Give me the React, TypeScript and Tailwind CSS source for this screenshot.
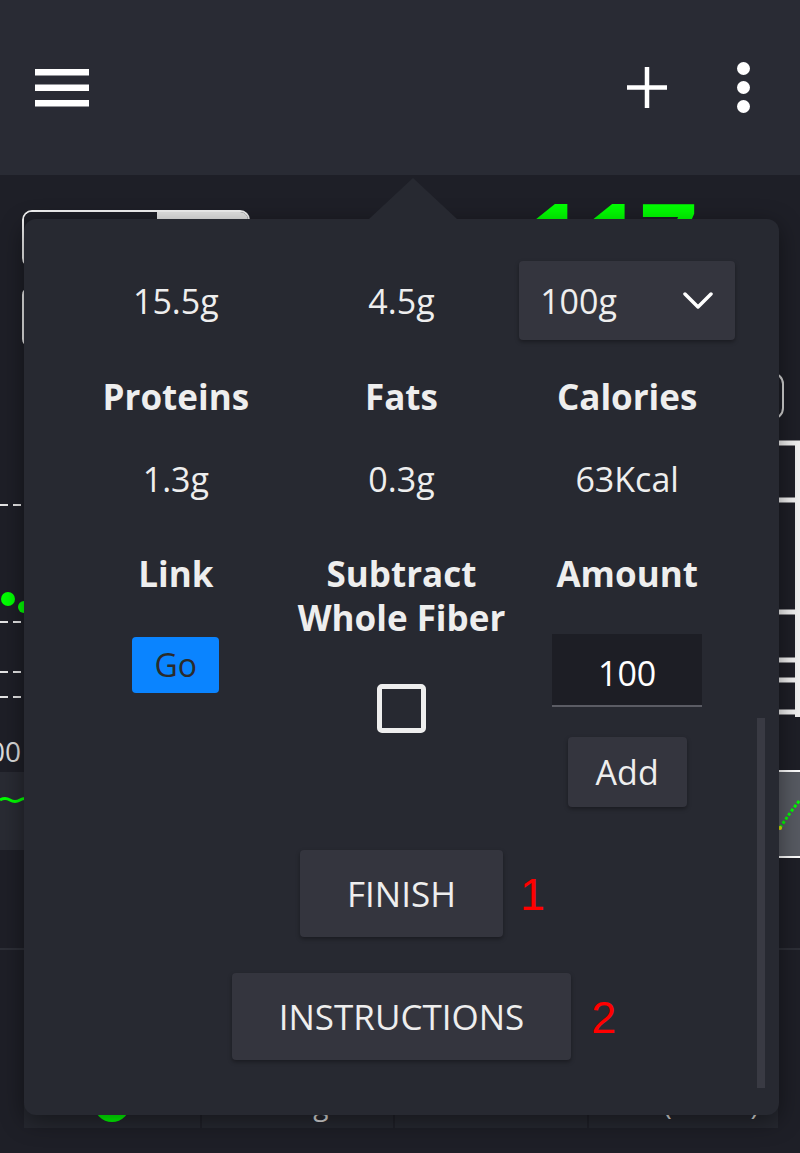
import React from 'react';

function Header() {
  return (
    <header className="flex h-[175px] items-center justify-between bg-[#292b34] pl-[35px] pr-[50px]">
      <svg width="54" height="38" viewBox="0 0 54 38" fill="#ffffff">
        <rect x="0" y="0" width="54" height="6.5" />
        <rect x="0" y="15.5" width="54" height="6.5" />
        <rect x="0" y="31" width="54" height="6.5" />
      </svg>
      <div className="flex items-center gap-[70px]">
        <svg width="40" height="41" viewBox="0 0 40 41" stroke="#ffffff" strokeWidth="4.5">
          <path d="M20 0 V41 M0 20.5 H40" />
        </svg>
        <svg width="13" height="51" viewBox="0 0 13 51" fill="#ffffff">
          <circle cx="6.5" cy="6.5" r="6.5" />
          <circle cx="6.5" cy="25.5" r="6.5" />
          <circle cx="6.5" cy="44.5" r="6.5" />
        </svg>
      </div>
    </header>
  );
}

// the screen behind the popover, mostly hidden
function Backdrop() {
  return (
    <main className="bg-[#1e1f27]">
      <section className="h-[265px] px-[22px]">
        <div className="flex h-[93px] items-start">
          <div className="mt-[35px] flex h-[58px] w-[228px] overflow-hidden rounded-[10px] border-2 border-[#f2f2f2]">
            <div className="w-[133px] bg-[#1e1f27]" />
            <div className="flex-1 bg-[#e4e4e4]" />
          </div>
          <span className="ml-[276px] mt-[32px] text-[100px] font-bold leading-[60px] text-[#00ff00]">117</span>
        </div>
        <div className="mt-[19px] h-[60px] w-[228px] rounded-[8px] border-2 border-[#e8e8e8]" />
        <div className="mt-[25px] flex justify-end">
          <div className="-mr-[6px] h-[48px] w-[200px] rounded-[12px] border-2 border-[#d6d6d6]" />
        </div>
      </section>

      <svg width="800" height="330" className="block">
        {[65, 182, 232, 257].map((y) => (
          <line key={y} x1="0" x2="760" y1={y} y2={y} stroke="#e6e6e6" strokeWidth="2" strokeDasharray="8 5" />
        ))}
        <circle cx="8" cy="159" r="7" fill="#00ff00" />
        <circle cx="24" cy="167" r="6" fill="#00ff00" />
        <path d="M797.5 3 V277" stroke="#f2f2f2" strokeWidth="5" />
        {[3, 60, 172, 220, 240, 272].map((y) => (
          <line key={y} x1="700" x2="800" y1={y} y2={y} stroke="#f2f2f2" strokeWidth="5" />
        ))}
        <text x="21" y="322" textAnchor="end" fill="#dddddd" fontSize="28" fontFamily="Open Sans, sans-serif">
          200
        </text>
      </svg>

      <svg width="800" height="90" className="block">
        <rect x="0" y="2" width="760" height="78" fill="#292b33" />
        <path d="M0 30 q 5 -3 10 0 t 10 0 t 10 0" stroke="#00ff00" strokeWidth="3" fill="none" />
        <rect x="778" y="0" width="22" height="88" fill="#575a62" />
        <line x1="778" x2="800" y1="1" y2="1" stroke="#ffffff" strokeWidth="2" />
        <line x1="778" x2="800" y1="87" y2="87" stroke="#ffffff" strokeWidth="2" />
        <path d="M780 58 Q 790 42 800 30" stroke="#00ff00" strokeWidth="3" strokeDasharray="3 2" fill="none" />
        <circle cx="780" cy="58" r="2" fill="#e5e500" />
      </svg>

      <div className="h-[88px]" />
      <div className="h-[132px] border-t-2 border-[#2d2f37]" />

      <div className="mx-[24px] flex h-[48px] w-[754px] bg-[#262830] text-[28px] text-[#dddddd]">
        <div className="flex w-[176px] items-center justify-center">
          <span className="h-[36px] w-[36px] rounded-full bg-[#00ff00]" />
        </div>
        <div className="flex w-[193px] items-center justify-center border-l-2 border-[#1f2028]">0.73 mg/dL</div>
        <div className="flex w-[194px] items-center justify-center border-l-2 border-[#1f2028]">0%</div>
        <div className="flex flex-1 items-center justify-center border-l-2 border-[#1f2028]">235 (93.3%)</div>
      </div>
      <div className="h-[25px]" />
    </main>
  );
}

function Chevron() {
  return (
    <svg width="30" height="18" viewBox="0 0 30 18" fill="none" stroke="#ffffff" strokeWidth="3.5" strokeLinecap="round" strokeLinejoin="round">
      <path d="M2 2 L15 15 L28 2" />
    </svg>
  );
}

function NutritionPopover() {
  return (
    <div className="absolute left-[24px] top-[219px] h-[896px] w-[755px] rounded-[12px] bg-[#272931] text-[#eeeeee] shadow-[0_6px_24px_rgba(0,0,0,0.45)]">
      <div className="absolute -top-[41px] left-[345px] h-0 w-0 border-x-[44px] border-b-[41px] border-x-transparent border-b-[#272931]" />
      <div className="absolute left-[733px] top-[499px] h-[370px] w-[8px] bg-[#393a43]" />

      <div className="px-[39px] pt-[42px] text-[34px] leading-[46px]">
        <div className="grid h-[79px] grid-cols-3 items-center text-center">
          <span>15.5g</span>
          <span>4.5g</span>
          <div className="mx-auto flex h-[79px] w-[216px] items-center justify-between rounded-[4px] bg-[#34353e] pl-[21px] pr-[22px] shadow-[0_2px_4px_rgba(0,0,0,0.35)]">
            <span>100g</span>
            <Chevron />
          </div>
        </div>

        <div className="mt-[35px] grid grid-cols-3 text-center text-[35px] font-bold leading-[44px]">
          <span>Proteins</span>
          <span>Fats</span>
          <span>Calories</span>
        </div>

        <div className="mt-[37px] grid grid-cols-3 text-center">
          <span>1.3g</span>
          <span>0.3g</span>
          <span>63Kcal</span>
        </div>

        <div className="mt-[50px] grid grid-cols-3 items-start">
          <div className="flex flex-col items-center">
            <span className="text-[35px] font-bold leading-[44px]">Link</span>
            <button className="mt-[41px] flex h-[56px] w-[87px] items-center justify-center rounded-[4px] bg-[#0a84ff] text-[32px] text-[#2b2b2b]">
              Go
            </button>
          </div>
          <div className="flex flex-col items-center">
            <span className="text-center text-[35px] font-bold leading-[44px]">
              Subtract
              <br />
              Whole Fiber
            </span>
            <div className="mt-[44px] h-[49px] w-[49px] rounded-[5px] border-[5px] border-[#eeeeee]" />
          </div>
          <div className="flex flex-col items-center">
            <span className="text-[35px] font-bold leading-[44px]">Amount</span>
            <input
              readOnly
              value="100"
              className="mt-[38px] h-[73px] w-[150px] border-b-2 border-[#5b5c64] bg-[#1d1e25] pt-[7px] text-center text-[34px] text-white outline-none"
            />
            <button className="mt-[30px] h-[70px] w-[119px] rounded-[4px] bg-[#34353e] shadow-[0_2px_4px_rgba(0,0,0,0.35)]">
              Add
            </button>
          </div>
        </div>

        <div className="mt-[43px] flex justify-center text-[35px]">
          <div className="relative">
            <button className="h-[87px] rounded-[4px] bg-[#34353e] px-[47px] shadow-[0_2px_4px_rgba(0,0,0,0.35)]">
              FINISH
            </button>
            <span className="absolute left-full top-1/2 ml-[17px] -translate-y-1/2 font-['Liberation_Sans',Arial,sans-serif] text-[45px] leading-none text-[#ff0000]">
              1
            </span>
          </div>
        </div>

        <div className="mt-[36px] flex justify-center text-[35px]">
          <div className="relative">
            <button className="h-[87px] rounded-[4px] bg-[#34353e] px-[47px] shadow-[0_2px_4px_rgba(0,0,0,0.35)]">
              INSTRUCTIONS
            </button>
            <span className="absolute left-full top-1/2 ml-[20px] -translate-y-1/2 font-['Liberation_Sans',Arial,sans-serif] text-[45px] leading-none text-[#ff0000]">
              2
            </span>
          </div>
        </div>
      </div>
    </div>
  );
}

export default function App() {
  return (
    <div className="relative min-h-[1153px] w-[800px] overflow-hidden bg-[#1e1f27] font-['Open_Sans',sans-serif] text-[#f2f2f2]">
      <Header />
      <Backdrop />
      <NutritionPopover />
    </div>
  );
}
